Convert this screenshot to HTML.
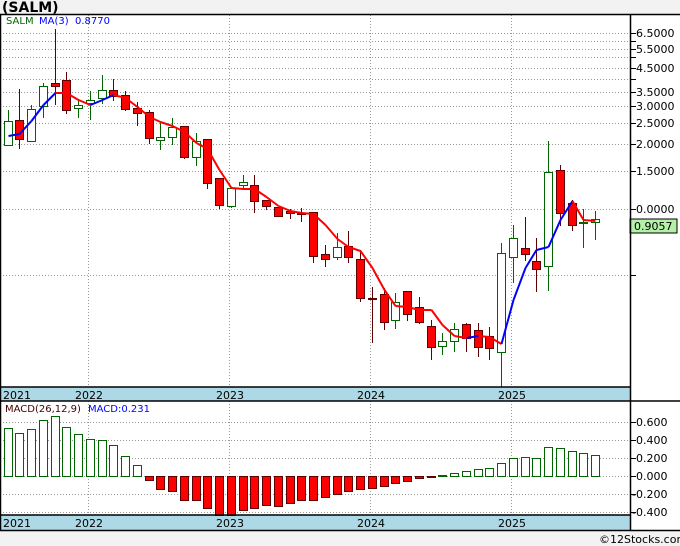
<!DOCTYPE html>
<html><head><meta charset="utf-8"><style>
body{margin:0;background:#f2f2f2;width:680px;height:546px;overflow:hidden;font-family:"DejaVu Sans","Liberation Sans",sans-serif}
svg{position:absolute;left:0;top:0}
text{font-family:"DejaVu Sans","Liberation Sans",sans-serif}
</style></head><body>
<svg id="s" width="680" height="546" xmlns="http://www.w3.org/2000/svg">
<rect x="0" y="14" width="680" height="517" fill="#fff"/>
<text x="2" y="12" font-size="14" font-weight="bold" fill="#000">(SALM)</text>
<g id="grid" stroke="#999" stroke-dasharray="1,2" stroke-width="1"></g>
<rect x="0" y="387" width="630" height="14" fill="#add8e6"/>
<rect x="0" y="515" width="630" height="15" fill="#add8e6"/>
<g font-size="11" fill="#000">
<text x="3" y="399">2021</text><text x="75" y="399">2022</text><text x="216" y="399">2023</text><text x="357" y="399">2024</text><text x="498" y="399">2025</text>
<text x="3" y="527">2021</text><text x="75" y="527">2022</text><text x="216" y="527">2023</text><text x="357" y="527">2024</text><text x="498" y="527">2025</text>
</g>
<g id="c"></g>
<g font-size="11" fill="#000">
<text x="636" y="37">6.5000</text><text x="636" y="53">5.5000</text><text x="636" y="72">4.5000</text>
<text x="636" y="96">3.5000</text><text x="636" y="110">3.0000</text><text x="636" y="127">2.5000</text>
<text x="636" y="148">2.0000</text><text x="636" y="175">1.5000</text><text x="636" y="213">0.0000</text>
<text x="636" y="426">0.600</text><text x="636" y="444">0.400</text><text x="636" y="462">0.200</text>
<text x="636" y="480">0.000</text><text x="632" y="498">-0.200</text><text x="632" y="516">-0.400</text>
</g>
<rect x="630" y="219" width="47" height="14" fill="#b4f0a8" stroke="#000"/>
<text x="634" y="230" font-size="11" fill="#000">0.9057</text>
<text x="6" y="24" font-size="10" fill="#006400">SALM</text>
<text x="39" y="24" font-size="10" fill="#0000ff">MA(3)</text>
<text x="75" y="24" font-size="10" fill="#0000ff">0.8770</text>
<text x="5" y="412" font-size="10" fill="#400000">MACD(26,12,9)</text>
<text x="88" y="412" font-size="10" fill="#0000ff">MACD:0.231</text>
<g fill="none" stroke="#000" stroke-width="1.5">
<line x1="0" y1="14.5" x2="680" y2="14.5"/>
<line x1="0" y1="401" x2="680" y2="401"/>
<line x1="0" y1="530.5" x2="680" y2="530.5"/>
<line x1="630.5" y1="14" x2="630.5" y2="531"/>
<line x1="0" y1="387" x2="630" y2="387"/><line x1="0" y1="515" x2="630" y2="515"/>
<line x1="0.5" y1="14" x2="0.5" y2="531"/>
</g>
<text x="599" y="543" font-size="11" fill="#000">©12Stocks.com</text>
</svg>
<script>
var NS="http://www.w3.org/2000/svg",g=document.getElementById('grid'),c=document.getElementById('c');
function el(p,t,a){var e=document.createElementNS(NS,t);for(var k in a)e.setAttribute(k,a[k]);p.appendChild(e);return e;}
[33,41,49,57,68,79,92,106,123,144,171,209,275,422,440,458,476,494,512].forEach(function(y){el(g,'line',{x1:0,x2:630,y1:y+.5,y2:y+.5});el(c,'line',{x1:630,x2:636,y1:y+.5,y2:y+.5,stroke:'#000'});});
[88,229,370,511].forEach(function(x){el(g,'line',{x1:x+.5,x2:x+.5,y1:15,y2:387});el(g,'line',{x1:x+.5,x2:x+.5,y1:401,y2:515});});
var d=[[145,121,110,146],[120,139,89,149],[141,109,105,141],[106,86,83,118],[83,86,29,105],[80,110,72,114],[108,105,99,118],[103,100,91,120],[98,90,75,104],[90,96,79,101],[95,109,91,111],[108,113,102,126],[112,138,110,144],[140,137,122,150],[137,127,118,145],[126,157,126,159],[157,141,133,166],[139,183,139,189],[178,205,178,209],[206,188,188,208],[185,182,175,189],[185,201,175,213],[200,206,200,210],[207,216,207,216],[211,213,209,219],[213,214,208,222],[212,256,212,263],[254,259,245,267],[257,247,233,260],[246,257,231,263],[259,298,250,302],[298,298,287,343],[294,322,288,330],[320,302,293,329],[291,314,291,321],[307,322,297,324],[326,347,320,360],[346,341,333,355],[341,329,323,352],[324,338,323,352],[330,347,323,357],[336,348,327,360],[352,253,243,387],[257,238,225,283],[248,254,217,261],[261,269,238,292],[266,172,141,291],[170,213,165,226],[203,225,200,231],[223,222,209,248],[222,219,211,240]];
var ma=[136,134,121,105,93,93,100,105,100,95,98,107,117,122,126,132,143,149,170,188,189,189,197,206,211,213,214,225,239,247,251,268,290,306,307,310,310,325,336,338,336,337,344,300,268,250,247,220,201,220,221];
var m=[428,433,429,420,416,427,434,439,440,445,456,465,480,489,491,500,500,508,515,515,510,508,505,506,503,500,500,497,494,491,489,488,486,483,481,478,477,475,473,471,469,468,463,458,457,458,447,448,451,453,455];
d.forEach(function(o,i){var x=Math.round(7.5+11.75*i),up=o[1]<o[0]||(o[1]==o[0]&&i>40),col=up?'#006400':'#600000';
el(c,'line',{x1:x+.5,x2:x+.5,y1:o[2],y2:o[3],stroke:col});
var t=Math.min(o[0],o[1]),h=Math.max(Math.abs(o[0]-o[1]),1);
el(c,'rect',{x:x-3.5,y:t+.5,width:8,height:h,fill:up?'#fff':'#f00',stroke:up?'#006400':'#600000'});
var v=m[i];if(v<476)el(c,'rect',{x:x-3.5,y:v+.5,width:8,height:476-v,fill:'#fff',stroke:'#006400'});
else el(c,'rect',{x:x-3.5,y:476.5,width:8,height:Math.max(v-476,1),fill:'#f00',stroke:'#600000'});
});
for(var i=0;i<ma.length-1;i++){var x1=Math.round(7.5+11.75*i)+.5,x2=Math.round(7.5+11.75*(i+1))+.5;el(c,'line',{x1:x1,x2:x2,y1:ma[i],y2:ma[i+1],stroke:ma[i+1]<ma[i]?'#0000ff':'#ff0000','stroke-width':2});}
</script>
</body></html>
